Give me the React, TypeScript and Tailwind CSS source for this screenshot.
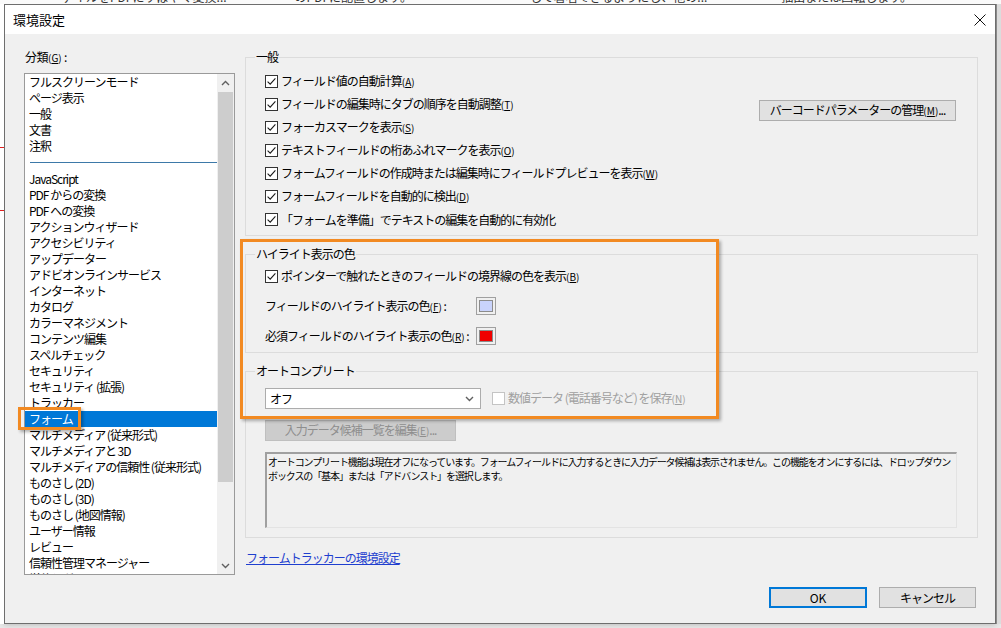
import React from "react";

const FONT = { fontFamily: '"Noto Sans CJK JP", "Noto Sans", sans-serif' };

const categories = [
  "JavaScript",
  "PDF からの変換",
  "PDF への変換",
  "アクションウィザード",
  "アクセシビリティ",
  "アップデーター",
  "アドビオンラインサービス",
  "インターネット",
  "カタログ",
  "カラーマネジメント",
  "コンテンツ編集",
  "スペルチェック",
  "セキュリティ",
  "セキュリティ (拡張)",
  "トラッカー",
  "フォーム",
  "マルチメディア (従来形式)",
  "マルチメディアと 3D",
  "マルチメディアの信頼性 (従来形式)",
  "ものさし (2D)",
  "ものさし (3D)",
  "ものさし (地図情報)",
  "ユーザー情報",
  "レビュー",
  "信頼性管理マネージャー",
  "単位とガイド",
];

const general = [
  { label: "フィールド値の自動計算", key: "A" },
  { label: "フィールドの編集時にタブの順序を自動調整", key: "T" },
  { label: "フォーカスマークを表示", key: "S" },
  { label: "テキストフィールドの桁あふれマークを表示", key: "O" },
  { label: "フォームフィールドの作成時または編集時にフィールドプレビューを表示", key: "W" },
  { label: "フォームフィールドを自動的に検出", key: "D" },
  { label: "「フォームを準備」でテキストの編集を自動的に有効化", key: "" },
];

function Key({ k }: { k: string }) {
  return (
    <span className="text-[10px] tracking-normal">
      (<span className="underline">{k}</span>)
    </span>
  );
}

function Check({ checked = true, disabled = false }: { checked?: boolean; disabled?: boolean }) {
  return (
    <svg width="13" height="13" viewBox="0 0 13 13" className="shrink-0">
      <rect x="0.5" y="0.5" width="12" height="12" fill="#ffffff" stroke={disabled ? "#c4c4c4" : "#333333"} />
      {checked && <path d="M2.6 6.6 L5.2 9.2 L10.4 3.4" fill="none" stroke="#1a1a1a" strokeWidth="1.1" />}
    </svg>
  );
}

function Chevron({ up }: { up?: boolean }) {
  return (
    <svg width="9" height="6" viewBox="0 0 9 6">
      <path d={up ? "M1 5 L4.5 1.5 L8 5" : "M1 1 L4.5 4.5 L8 1"} fill="none" stroke="#606060" strokeWidth="1.4" />
    </svg>
  );
}

function Backdrop() {
  return (
    <div className="h-[4px] overflow-hidden bg-[#fafafa] relative text-[12px] text-[#333] whitespace-nowrap">
      <div className="flex -mt-[11px] leading-[16px]">
        <span className="ml-[62px]">ァイルをPDFにすばやく変換...</span>
        <span className="ml-[68px]">のPDFに配置します。</span>
        <span className="ml-[118px]">して署名できるようにし、他の...</span>
        <span className="ml-[74px]">抽出または回転します。</span>
      </div>
    </div>
  );
}

function CategoryList() {
  return (
    <div className="mt-[8px] h-[502px] border border-[#9a9a9a] bg-white flex">
      <div className="flex-1 overflow-hidden text-[12px] leading-[16px] tracking-[-1px]">
        {["フルスクリーンモード", "ページ表示", "一般", "文書", "注釈"].map((c) => (
          <div key={c} className="h-[16px] pl-[4px]">{c}</div>
        ))}
        <div className="h-[17px] flex items-center pl-[5px]">
          <div className="h-[1px] w-full bg-[#3d79a8] -mt-[1px]" />
        </div>
        {categories.map((c) => (
          <div
            key={c}
            className={`h-[16px] pl-[4px] whitespace-nowrap ${c === "フォーム" ? "bg-[#0078d7] text-white" : ""}`}
          >
            {c}
          </div>
        ))}
      </div>
      <div className="w-[17px] bg-[#f0f0f0] flex flex-col">
        <div className="h-[17px] flex items-center justify-center"><Chevron up /></div>
        <div className="h-[390px] mx-[1px] mt-[1px] bg-[#cdcdcd]" />
        <div className="flex-1" />
        <div className="h-[17px] flex items-center justify-center"><Chevron /></div>
      </div>
    </div>
  );
}

function Group({ title, className, children }: { title: string; className?: string; children: React.ReactNode }) {
  return (
    <fieldset className={`border border-[#dcdcdc] ${className ?? ""}`}>
      <legend className="ml-[9px] px-[1px] text-[12px] leading-[16px] tracking-[-1px]">{title}</legend>
      {children}
    </fieldset>
  );
}

function Swatch({ color }: { color: string }) {
  return (
    <div className="w-[20px] h-[18px] border border-[#a0a0a0] bg-[#f0f0f0] p-[2px]">
      <div className="w-full h-full border border-[#8c8c8c]" style={{ backgroundColor: color }} />
    </div>
  );
}

export default function App() {
  return (
    <div className="relative w-[1001px] h-[628px] overflow-hidden bg-[#e9e9e9] text-black" style={FONT}>
      <Backdrop />
      <div className="flex">
        <div className="w-[4px] h-[620px] bg-white relative">
          <div className="absolute left-0 top-[143px] w-[4px] h-[1px] bg-[#e02020]" />
          <div className="absolute left-0 top-[206px] w-[4px] h-[1px] bg-[#e02020]" />
        </div>

        <div className="w-[992px] h-[620px] border border-[#6e6e6e] flex flex-col shadow-[0_0_6px_rgba(0,0,0,0.25)]">
          {/* title bar */}
          <div className="h-[29px] bg-white flex items-center justify-between pl-[8px] pr-[9px]">
            <span className="text-[13px] leading-[16px]">環境設定</span>
            <svg width="12" height="12" viewBox="0 0 12 12">
              <path d="M0.5 0.5 L11.5 11.5 M11.5 0.5 L0.5 11.5" stroke="#111" strokeWidth="1" />
            </svg>
          </div>

          {/* body */}
          <div className="flex-1 bg-[#f0f0f0] flex flex-col">
            <div className="flex pl-[19px] pt-[15px]">
              <div className="w-[211px]">
                <div className="h-[16px] text-[12px] leading-[16px] pl-[1px] tracking-[-0.5px]">
                  分類<Key k="G" /> :
                </div>
                <CategoryList />
              </div>

              <div className="ml-[10px] w-[733px] text-[12px] leading-[16px]">
                <Group title="一般">
                  <div className="flex justify-between pt-[5px] pb-[4px] pl-[19px] pr-[21px]">
                    <div>
                      {general.map((g) => (
                        <div key={g.label} className="h-[23px] flex items-center gap-[3px]">
                          <Check />
                          <span className="tracking-[-1px] whitespace-nowrap">
                            {g.label}
                            {g.key && <Key k={g.key} />}
                          </span>
                        </div>
                      ))}
                    </div>
                    <div className="pt-[30px]">
                      <button className="w-[197px] h-[21px] border border-[#adadad] bg-[#e1e1e1] text-[12px] leading-[16px] tracking-[-1px]">
                        バーコードパラメーターの管理<Key k="M" />...
                      </button>
                    </div>
                  </div>
                </Group>

                <Group title="ハイライト表示の色" className="mt-[10px]">
                  <div className="pl-[19px] pt-[3px] pb-[1px]">
                    <div className="h-[23px] flex items-center gap-[3px]">
                      <Check />
                      <span className="tracking-[-1px] whitespace-nowrap">
                        ポインターで触れたときのフィールドの境界線の色を表示<Key k="B" />
                      </span>
                    </div>
                    <div className="mt-[3px] h-[30px] flex items-center">
                      <span className="w-[211px] tracking-[-1px] whitespace-nowrap">
                        フィールドのハイライト表示の色<Key k="F" /> :
                      </span>
                      <Swatch color="#c9d3fb" />
                    </div>
                    <div className="h-[30px] flex items-center">
                      <span className="w-[211px] tracking-[-1px] whitespace-nowrap">
                        必須フィールドのハイライト表示の色<Key k="R" /> :
                      </span>
                      <Swatch color="#f00000" />
                    </div>
                  </div>
                </Group>

                <Group title="オートコンプリート" className="mt-[10px]">
                  <div className="pl-[19px] pt-[9px] pb-[9px]">
                    <div className="flex items-center">
                      <div className="w-[216px] h-[21px] border border-[#acacac] bg-white flex items-center justify-between pl-[4px] pr-[6px]">
                        <span className="tracking-[-1px]">オフ</span>
                        <Chevron />
                      </div>
                      <div className="ml-[11px] flex items-center gap-[3px] text-[#a0a0a0]">
                        <Check checked={false} disabled />
                        <span className="tracking-[-1px] whitespace-nowrap">
                          数値データ (電話番号など) を保存<Key k="N" />
                        </span>
                      </div>
                    </div>
                    <button className="mt-[11px] w-[191px] h-[21px] bg-[#cccccc] border border-[#bfbfbf] text-[#8e8e8e] text-[12px] leading-[16px] tracking-[-1px]">
                      入力データ候補一覧を編集<Key k="E" />...
                    </button>
                    <div className="mt-[11px] w-[692px] h-[76px] border-t-2 border-l-2 border-r border-b border-t-[#a0a0a0] border-l-[#a0a0a0] border-r-[#e3e3e3] border-b-[#e3e3e3] bg-[#f0f0f0] pl-[1px] pt-[1px] text-[10px] leading-[14px] tracking-[-1.1px] whitespace-nowrap">
                      <div>オートコンプリート機能は現在オフになっています。フォームフィールドに入力するときに入力データ候補は表示されません。この機能をオンにするには、ドロップダウン</div>
                      <div>ボックスの「基本」または「アドバンスト」を選択します。</div>
                    </div>
                  </div>
                </Group>

                <a className="block mt-[12px] ml-[1px] text-[#1f3fcf] underline tracking-[-1px]" href="#">
                  フォームトラッカーの環境設定
                </a>
              </div>
            </div>

            <div className="mt-[12px] flex justify-end gap-[12px] pr-[19px]">
              <button className="w-[98px] h-[21px] border-2 border-[#0078d7] bg-[#e1e1e1] text-[12px] leading-[16px]">
                OK
              </button>
              <button className="w-[97px] h-[21px] border border-[#adadad] bg-[#e1e1e1] text-[12px] leading-[16px] tracking-[-1px]">
                キャンセル
              </button>
            </div>
          </div>
        </div>

        <div className="flex-1 h-[620px] bg-[#dcdcdc] border-l border-[#8a8a8a]" />
      </div>

      {/* annotation highlights drawn over the dialog */}
      <div className="absolute left-[240px] top-[239px] w-[479px] h-[180px] border-[3px] border-[#f28a22] shadow-[2px_2px_3px_rgba(0,0,0,0.3)] pointer-events-none" />
      <div className="absolute left-[18px] top-[407px] w-[63px] h-[23px] border-[3px] border-[#f28a22] shadow-[2px_2px_3px_rgba(0,0,0,0.3)] pointer-events-none" />
    </div>
  );
}
